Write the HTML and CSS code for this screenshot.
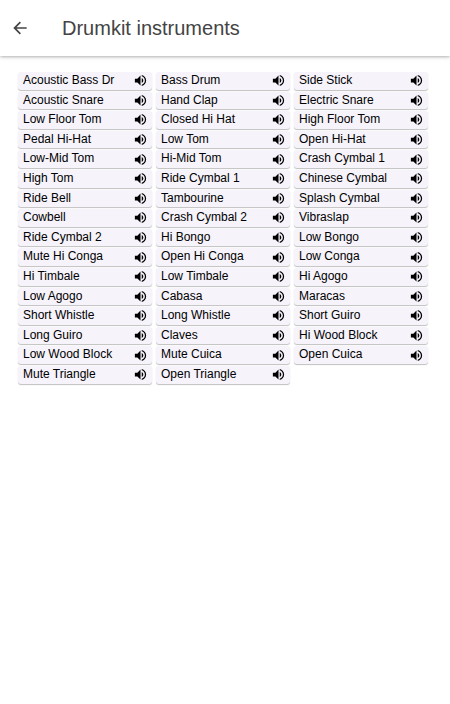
FILE: index.html
```
<!DOCTYPE html>
<html lang="en">

<head>
    <meta charset="UTF-8">
    <meta name="viewport" content="width=device-width, initial-scale=1.0">
    <title>Drumkit instruments</title>
    <link rel="stylesheet" href="styles.css">
</head>

<body>
    <header>
        <button id="back-button" type="button" aria-label="Back">
            <svg viewBox="0 0 24 24" aria-hidden="true">
                <path d="M20 11H7.83l5.3-5.3L11.7 4.3 4 12l7.7 7.7 1.41-1.41L7.83 13H20v-2z" />
            </svg>
        </button>
        <h1>Drumkit instruments</h1>
    </header>
    <main>
        <ul id="instruments"></ul>
    </main>
    <template id="instrument-template">
        <li class="instrument">
            <button class="name" type="button"></button>
            <button class="play" type="button">
                <svg viewBox="0 0 24 24" aria-hidden="true">
                    <path d="M3 9v6h4l5 5V4L7 9H3zm13.5 3c0-1.77-1.02-3.29-2.5-4.03v8.05c1.48-.73 2.5-2.25 2.5-4.02zM14 3.23v2.06c2.89.86 5 3.54 5 6.71s-2.11 5.85-5 6.71v2.06c4.01-.91 7-4.49 7-8.77s-2.99-7.86-7-8.77z" />
                </svg>
            </button>
        </li>
    </template>
    <script>
        const instruments = [
            "Acoustic Bass Dr", "Bass Drum", "Side Stick",
            "Acoustic Snare", "Hand Clap", "Electric Snare",
            "Low Floor Tom", "Closed Hi Hat", "High Floor Tom",
            "Pedal Hi-Hat", "Low Tom", "Open Hi-Hat",
            "Low-Mid Tom", "Hi-Mid Tom", "Crash Cymbal 1",
            "High Tom", "Ride Cymbal 1", "Chinese Cymbal",
            "Ride Bell", "Tambourine", "Splash Cymbal",
            "Cowbell", "Crash Cymbal 2", "Vibraslap",
            "Ride Cymbal 2", "Hi Bongo", "Low Bongo",
            "Mute Hi Conga", "Open Hi Conga", "Low Conga",
            "Hi Timbale", "Low Timbale", "Hi Agogo",
            "Low Agogo", "Cabasa", "Maracas",
            "Short Whistle", "Long Whistle", "Short Guiro",
            "Long Guiro", "Claves", "Hi Wood Block",
            "Low Wood Block", "Mute Cuica", "Open Cuica",
            "Mute Triangle", "Open Triangle"
        ]

        const list = document.getElementById("instruments")
        const template = document.getElementById("instrument-template")

        instruments.forEach(name => {
            const item = document.importNode(template.content, true)
            item.querySelector(".name").textContent = name
            item.querySelector(".play").setAttribute("aria-label", "Play " + name)
            list.appendChild(item)
        })
    </script>
</body>

</html>
```

FILE: styles.css
```
* {
    box-sizing: border-box;
}

body {
    margin: 0;
    background-color: #fff;
    color: #000;
    font-family: "Liberation Sans", Arial, Helvetica, sans-serif;
    font-size: 12px;
    line-height: 1.3;
}

button {
    margin: 0;
    padding: 0;
    border: none;
    background: none;
    color: inherit;
    font: inherit;
    cursor: pointer;
}

svg {
    display: block;
    fill: currentColor;
}

header {
    display: flex;
    align-items: center;
    gap: 32px;
    height: 56px;
    padding: 0 10px;
    color: #444;
    box-shadow: 0 0 4px rgba(0, 0, 0, 0.5);
}

#back-button svg {
    width: 20px;
    height: 20px;
}

h1 {
    margin: 0;
    font-size: 20px;
    font-weight: normal;
}

main {
    padding: 16px 22px 16px 18px;
}

#instruments {
    display: grid;
    grid-template-columns: repeat(auto-fill, minmax(130px, 1fr));
    gap: 2px 4px;
    margin: 0;
    padding: 0;
    list-style: none;
}

.instrument {
    display: flex;
    align-items: center;
    padding: 0 4px 0 5px;
    border-radius: 3px;
    background-color: #f6f3fb;
    box-shadow: 0 1px 1px rgba(0, 0, 0, 0.25);
}

.name {
    flex: 1;
    padding: 1px 0;
    overflow: hidden;
    text-align: left;
    white-space: nowrap;
}

.play svg {
    width: 15px;
    height: 15px;
}

.instrument:hover {
    background-color: #e9e3f5;
}
```
